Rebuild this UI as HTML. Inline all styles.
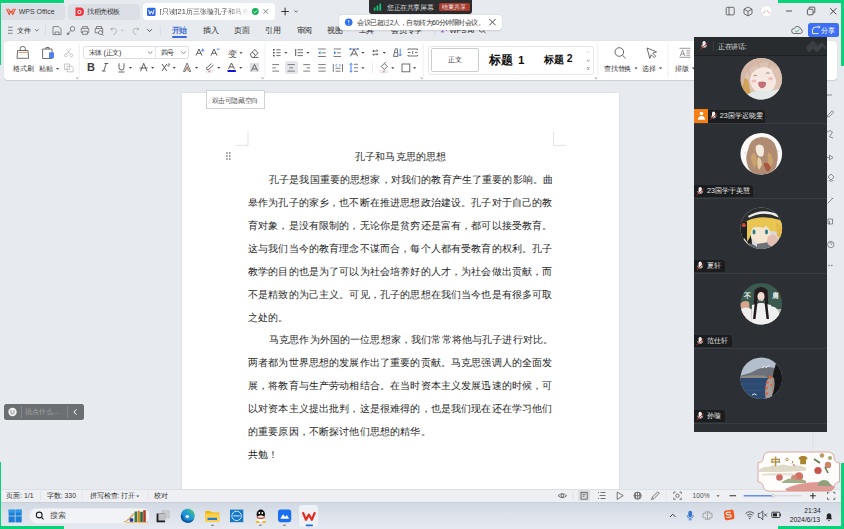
<!DOCTYPE html>
<html><head><meta charset="utf-8"><style>
*{margin:0;padding:0;box-sizing:border-box}
body{width:844px;height:529px;overflow:hidden;position:relative;background:#e7eaef;font-family:"Liberation Sans",sans-serif;color:#333}
.a{position:absolute}
.t{position:absolute;white-space:nowrap;line-height:1}
svg{position:absolute;left:0;top:0;overflow:visible}
.doc{position:absolute;left:248px;font-family:"Liberation Serif",serif;font-size:10px;letter-spacing:.15px;line-height:1;color:#1f1f1f;white-space:nowrap}
.g{position:absolute;background:#08d27a}
.m{font-size:8px;letter-spacing:-.25px;top:27.2px;color:#2b2b2b}
.rl{font-size:7px;letter-spacing:-.35px;color:#333}
.nm{position:absolute;height:12px;background:#1b1c1e;border-radius:0 4px 0 0;color:#e8e8e8;font-size:7.2px;line-height:12px;white-space:nowrap}
</style></head><body>
<!-- ============ TAB BAR ============ -->
<div class="a" style="left:1px;top:3.7px;width:64px;height:16px;background:#dcdfe5;border-radius:0 4px 4px 0"></div>
<div class="a" style="left:68px;top:3.7px;width:71.5px;height:16px;background:#dcdfe5;border-radius:4px"></div>
<div class="a" style="left:143px;top:3px;width:132px;height:16.7px;background:#fff;border-radius:4px"></div>
<div class="t" style="left:18.7px;top:7.6px;font-size:7px;color:#3a3a3a">WPS Office</div>
<div class="t" style="left:87px;top:7.8px;font-size:7px;letter-spacing:-.4px;color:#333">找稻壳模板</div>
<div class="t" style="left:159.5px;top:7.8px;font-size:7.4px;color:#444;width:90px;overflow:hidden;-webkit-mask-image:linear-gradient(90deg,#000 75%,transparent)">[只读]21历三张璇孔子和马克思</div>
<svg width="844" height="529">
 <!-- WPS logo -->
 <path d="M6.6 8.8 L9.2 14.6 L11 11 L12.8 14.6 L15.4 8.8 M8.6 8.8 L10.2 12.4 M13.4 8.8 L11.8 12.4" fill="none" stroke="#ea4a2e" stroke-width="1.1" stroke-linejoin="round"/>
 <!-- daoke icon -->
 <path d="M75.5 7.6 h4.5 a4 4.2 0 0 1 0 8.4 h-4.5 z" fill="#e9383f"/>
 <circle cx="79.3" cy="12" r="1.6" fill="none" stroke="#fff" stroke-width=".9"/>
 <!-- W doc icon -->
 <rect x="147" y="7.8" width="8.6" height="8.3" rx="1.3" fill="#2f67e6"/>
 <path d="M148.6 9.8 L149.8 14.2 L151.3 11 L152.8 14.2 L154 9.8" fill="none" stroke="#fff" stroke-width=".9"/>
 <!-- green check -->
 <circle cx="255.3" cy="11.5" r="3.4" fill="#14b05a"/>
 <path d="M253.6 11.6 l1.2 1.2 l2.2 -2.3" fill="none" stroke="#fff" stroke-width=".9"/>
 <!-- close x -->
 <path d="M263.5 9.2 l4.6 4.6 M268.1 9.2 l-4.6 4.6" stroke="#666" stroke-width=".8"/>
 <!-- plus -->
 <path d="M281.3 11.5 h7.6 M285.1 7.7 v7.6" stroke="#333" stroke-width="1"/>
 <path d="M294.5 10.7 l1.6 1.5 l1.6 -1.5" fill="none" stroke="#444" stroke-width=".8"/>
 <!-- top right icons -->
 <rect x="726.2" y="7.3" width="8" height="7.6" rx="1" fill="none" stroke="#555" stroke-width=".85"/>
 <path d="M729 7.3 v7.6" stroke="#555" stroke-width=".85"/>
 <path d="M748 7 l4 2.2 v4.5 l-4 2.2 l-4 -2.2 v-4.5 z M744 9.2 l4 2.2 l4 -2.2 M748 11.4 v4.5" fill="none" stroke="#555" stroke-width=".85"/>
 <circle cx="766.4" cy="11.2" r="5.6" fill="#fff" stroke="#d8dadd" stroke-width=".6"/>
 <ellipse cx="763.6" cy="12.6" rx="1.1" ry=".8" fill="#f6b8b8"/><ellipse cx="769.2" cy="12.6" rx="1.1" ry=".8" fill="#f6b8b8"/>
 <path d="M764.6 10.3 l.9 .6 l-.9 .6 M768.2 10.3 l-.9 .6 l.9 .6" fill="none" stroke="#666" stroke-width=".45"/>
 <path d="M786 11 h6" stroke="#444" stroke-width=".9"/>
 <rect x="807.4" y="9.2" width="5.6" height="5.6" rx="1" fill="none" stroke="#444" stroke-width=".85"/>
 <path d="M809 9.2 v-1.3 a.8 .8 0 0 1 .8 -.8 h4.2 a.8 .8 0 0 1 .8 .8 v4.2 a.8 .8 0 0 1 -.8 .8 h-1" fill="none" stroke="#444" stroke-width=".85"/>
 <path d="M830.2 8.2 l6.2 6.2 M836.4 8.2 l-6.2 6.2" stroke="#333" stroke-width=".9"/>
</svg>
<!-- ============ MENU ROW ============ -->
<div class="t" style="left:17px;top:26.8px;font-size:7px;letter-spacing:-.3px;color:#2b2b2b">文件</div>
<div class="t m" style="left:171.5px;color:#2f5fd0;-webkit-text-stroke:.2px #2f5fd0">开始</div>
<div class="a" style="left:172px;top:36.3px;width:15px;height:1.4px;background:#3a68e0;border-radius:1px"></div>
<div class="t m" style="left:203px">插入</div>
<div class="t m" style="left:234px">页面</div>
<div class="t m" style="left:265px">引用</div>
<div class="t m" style="left:296.5px">审阅</div>
<div class="t m" style="left:327px">视图</div>
<div class="t m" style="left:358.5px">工具</div>
<div class="t m" style="left:391px">会员专享</div>
<div class="t m" style="left:449.5px;font-size:7.6px;top:27px">WPS AI</div>
<div class="a" style="left:808px;top:23px;width:30.5px;height:13.5px;background:#3d6ef5;border-radius:2.5px"></div>
<div class="t" style="left:821px;top:26.5px;font-size:7.4px;color:#fff">分享</div>
<svg width="844" height="529">
 <path d="M8 27.2 h4.6 M8 30.3 h4.6 M8 33.3 h4.6" stroke="#555" stroke-width=".7"/>
 <path d="M35 29.3 l1.8 1.7 l1.8 -1.7" fill="none" stroke="#555" stroke-width=".8"/>
 <path d="M45.5 25 v11 M160.3 25.5 v10" stroke="#d0d3d8" stroke-width=".6"/>
 <!-- save -->
 <path d="M53 26.6 h5.8 l2.2 2.2 v5.8 h-8 z M55 34.6 v-2.6 h4 v2.6" fill="none" stroke="#606060" stroke-width=".7"/>
 <!-- link P -->
 <circle cx="72.5" cy="28.8" r="2.3" fill="none" stroke="#606060" stroke-width=".75"/>
 <path d="M70.8 30.5 l-3 3.6" stroke="#606060" stroke-width=".75"/>
 <circle cx="68" cy="33.8" r=".9" fill="none" stroke="#555" stroke-width=".7"/>
 <!-- printer -->
 <path d="M82.6 28.4 v-1.8 h4.8 v1.8 M81.2 28.4 h7.6 v4.2 h-1.4 M82.6 32.6 h-1.4 v-4.2 M82.6 31.2 h4.8 v3.2 h-4.8z" fill="none" stroke="#606060" stroke-width=".7"/>
 <!-- print preview -->
 <path d="M96.5 28.5 v-2 h5 v2 M95.2 28.5 h7.5 v4.3 h-7.5 z" fill="none" stroke="#606060" stroke-width=".75"/>
 <circle cx="100.5" cy="32.6" r="2" fill="#e7eaef" stroke="#606060" stroke-width=".75"/>
 <path d="M102 34 l1.6 1.6" stroke="#606060" stroke-width=".75"/>
 <!-- undo redo -->
 <path d="M112 27.5 l-1.3 2 l2.2 .6 M110.8 29.4 c2.5 -2 6 -1 5.5 2.3 c-.3 2 -2 2.5 -3.2 2.6" fill="none" stroke="#aaa" stroke-width=".85"/>
 <path d="M121 29.8 l1.3 1.2 l1.3 -1.2" fill="none" stroke="#aaa" stroke-width=".7"/>
 <path d="M137.5 27.5 l1.3 2 l-2.2 .6 M138.7 29.4 c-2.5 -2 -6 -1 -5.5 2.3 c.3 2 2 2.5 3.2 2.6" fill="none" stroke="#aaa" stroke-width=".85"/>
 <path d="M147.3 29.3 l2.3 2.2 l2.3 -2.2" fill="none" stroke="#444" stroke-width=".9"/>
 <!-- separator & ai & search -->
 <path d="M435 25 v11" stroke="#d0d3d8" stroke-width=".6"/>
 <path d="M441.5 27.5 l2 5 M443.5 27.5 l-2 5 M445 27 l1.5 3 l1.5 -3" stroke="#a05ff0" stroke-width="1.1"/>
 <circle cx="481.8" cy="29.5" r="2.6" fill="none" stroke="#555" stroke-width=".85"/>
 <path d="M483.7 31.4 l1.9 1.9" stroke="#555" stroke-width=".85"/>
 <!-- cloud check -->
 <path d="M794 33.5 a2.5 2.5 0 0 1 .3 -5 a3.3 3.3 0 0 1 6.3 .5 a2.3 2.3 0 0 1 -.3 4.5 z" fill="none" stroke="#555" stroke-width=".85"/>
 <path d="M795.2 30.8 l1.3 1.3 l2.6 -2.6" fill="none" stroke="#16a35a" stroke-width=".9"/>
 <!-- share icon -->
 <path d="M812.5 30 v3.6 h6 M816 27 h4 l-1.3 -1.3 M820 27 l-1.3 1.3 M812.5 30 a3.3 3.3 0 0 1 3.5 -3" fill="none" stroke="#fff" stroke-width=".9"/>
</svg>
<!-- ============ RIBBON ============ -->
<div class="a" style="left:4px;top:40.6px;width:833px;height:39.9px;background:#fff;border-radius:4px;box-shadow:0 .6px 1.2px rgba(0,0,0,.12)"></div>
<div class="t rl" style="left:13.3px;top:65px">格式刷</div>
<div class="t rl" style="left:39.3px;top:65px">粘贴</div>
<!-- font combo -->
<div class="a" style="left:83.3px;top:45.9px;width:105.5px;height:13.1px;border:.8px solid #dcdfe3;border-radius:2.5px"></div>
<div class="a" style="left:155.3px;top:46px;width:.7px;height:13px;background:#e2e4e8"></div>
<div class="t" style="left:88.5px;top:48.8px;font-size:7.2px;letter-spacing:-.3px;color:#333">宋体 (正文)</div>
<div class="t" style="left:160.8px;top:48.8px;font-size:7.2px;letter-spacing:-.5px;color:#333">四号</div>
<!-- styles gallery -->
<div class="a" style="left:428px;top:46px;width:165.5px;height:28.5px;border:.8px solid #e4e6ea;border-radius:3px"></div>
<div class="a" style="left:430.5px;top:48px;width:48.5px;height:24px;border:1.6px solid #c9ccd1;border-radius:2px"></div>
<div class="t" style="left:447.5px;top:56.3px;font-size:7.2px;color:#333">正文</div>
<div class="t" style="left:489px;top:53.5px;font-size:12.2px;font-weight:bold;color:#111">标题</div>
<div class="t" style="left:518px;top:54.3px;font-size:11.6px;font-weight:bold;color:#111">1</div>
<div class="t" style="left:543.5px;top:54.6px;font-size:10.2px;font-weight:bold;color:#111">标题</div>
<div class="t" style="left:566.8px;top:54.4px;font-size:10.4px;font-weight:bold;color:#111">2</div>
<div class="t rl" style="left:604.3px;top:65.2px">查找替换</div>
<div class="t rl" style="left:642px;top:65.2px">选择</div>
<div class="t rl" style="left:675.4px;top:65.2px">排版</div>
<!-- highlighted boxes -->
<div class="a" style="left:285px;top:61.4px;width:12.6px;height:12.6px;background:#e6e7ea;border-radius:2px"></div>
<div class="a" style="left:250px;top:63.1px;width:9px;height:9.1px;background:#dddfe2"></div>
<svg width="844" height="529">
 <g fill="none" stroke="#555" stroke-width=".85" stroke-linejoin="round" stroke-linecap="round">
 <!-- format painter bag -->
 <path d="M18 50.5 h10 l.6 7.8 h-11.2 z M20.3 50.5 v-2.2 a2.5 1.8 0 0 1 5 0 v2.2"/>
 <path d="M19 52.4 h8" stroke="#f07d3c"/>
 <!-- paste clipboard -->
 <path d="M43 49 h9 v9.5 h-9 z M46 49 v-1.5 h3 v1.5"/>
 </g>
 <rect x="49" y="52.2" width="5" height="6" rx=".8" fill="#4f7ff0"/>
 <g fill="none" stroke="#bbb" stroke-width=".8">
 <circle cx="65.8" cy="55.3" r="1.4"/><circle cx="71.3" cy="55.3" r="1.4"/>
 <path d="M66.7 54.2 l4.2 -5.6 M70.4 54.2 l-4.2 -5.6"/>
 <path d="M64.5 64 h5 v5.5 h-5 z M67 66.2 h5 l1.2 1.2 v4.4 h-6.2 z"/>
 </g>
 <path d="M55.9 68 l1.6 1.7 l1.6 -1.7 z" fill="#444"/>
 <path d="M76 77 l1.8 1.8 M77.8 77.4 v1.4 h-1.4" stroke="#999" stroke-width=".6" fill="none"/>
 <path d="M79.3 43.5 v34" stroke="#e6e8eb" stroke-width=".7"/>
 <!-- combo chevrons -->
 <path d="M148 51.4 l2.2 2.1 l2.2 -2.1 M181.2 51.4 l2.2 2.1 l2.2 -2.1" fill="none" stroke="#666" stroke-width=".75"/>
 <!-- row2 B I U A X2 -->
 <text x="87" y="71.1" font-size="11" font-weight="bold" fill="#3d3d3d" font-family="Liberation Sans">B</text>
 <path d="M104.5 63.5 h3.8 M101.8 71 h3.8 M106.3 63.5 l-2.6 7.5" fill="none" stroke="#444" stroke-width=".85"/>
 <path d="M119 63.3 v4.2 a2.5 2.5 0 0 0 5 0 v-4.2 M118.5 72 h6" fill="none" stroke="#444" stroke-width=".85"/>
 <path d="M140.5 71.3 l3.2 -8 l3.2 8 M139.6 68 h8" fill="none" stroke="#444" stroke-width=".85"/>
 <path d="M162 64 l4.8 7 M166.8 64 l-4.8 7" stroke="#444" stroke-width=".9"/>
 <path d="M167.8 63.8 h1.7 v1.2 h-1.7 v1.2 h1.7" fill="none" stroke="#444" stroke-width=".55"/>
 <g fill="#444">
 <path d="M128.9 67 l1.6 1.7 l1.6 -1.7 z M151 67 l1.6 1.7 l1.6 -1.7 z M172.5 67 l1.6 1.7 l1.6 -1.7 z M195 67 l1.6 1.7 l1.6 -1.7 z M217.2 67 l1.6 1.7 l1.6 -1.7 z M239.2 67 l1.6 1.7 l1.6 -1.7 z"/>
 <path d="M239.4 52.2 l1.6 1.7 l1.6 -1.7 z M284.3 52 l1.6 1.7 l1.6 -1.7 z M306.3 52 l1.6 1.7 l1.6 -1.7 z M361.3 52 l1.6 1.7 l1.6 -1.7 z M382.7 52 l1.6 1.7 l1.6 -1.7 z M361.3 67.3 l1.6 1.7 l1.6 -1.7 z M391.2 67.3 l1.6 1.7 l1.6 -1.7 z M413 67.3 l1.6 1.7 l1.6 -1.7 z"/>
 <path d="M634.5 67.6 l1.6 1.7 l1.6 -1.7 z M659 67.6 l1.6 1.7 l1.6 -1.7 z M691.8 67.6 l1.6 1.7 l1.6 -1.7 z"/>
 </g>
 <!-- A+ A- -->
 <path d="M196 55.6 l3 -6.6 l3 6.6 M197.1 53.3 h3.8" fill="none" stroke="#444" stroke-width=".85"/>
 <path d="M201.2 50.2 h3.2 M202.8 48.6 v3.2" stroke="#3d7cf0" stroke-width=".9"/>
 <path d="M211 55.6 l3 -6.6 l3 6.6 M212.1 53.3 h3.8" fill="none" stroke="#444" stroke-width=".85"/>
 <path d="M216.6 49.2 h3" stroke="#3d7cf0" stroke-width=".9"/>
 <!-- pinyin -->
 <text x="227.5" y="56.8" font-size="9" fill="#444" font-family="Liberation Sans">变</text>
 <!-- eraser -->
 <path d="M250.2 54.2 l4.6 -4.6 l3.2 3.2 l-4.6 4.6 h-1.6 z M252.3 52.1 l3.2 3.2 M253.5 57.4 h5" fill="none" stroke="#444" stroke-width=".85"/>
 <!-- row2 A outline, highlighter, color, shade -->
 <path d="M183.5 71.5 l3.6 -8.5 l3.6 8.5 h-1.6 l-2 -4.8 l-2 4.8 z" fill="none" stroke="#555" stroke-width=".8" stroke-linejoin="round"/>
 <path d="M185.9 70.3 l1.2 -2.6 l1.2 2.6 z" fill="#f07d3c"/>
 <path d="M206 68.5 l5.5 -5 M208 70 l5.5 -5 M206 68.5 l2 1.5" fill="none" stroke="#444" stroke-width=".85"/>
 <ellipse cx="209.3" cy="71.4" rx="3.3" ry="1" fill="none" stroke="#ccc" stroke-width=".6"/>
 <path d="M208 71.8 l2.5 -.8" stroke="#e05050" stroke-width=".7"/>
 <path d="M228.5 69 l3 -6 l3 6 M229.6 67 h3.8" fill="none" stroke="#444" stroke-width=".85"/>
 <rect x="227.5" y="70" width="8.4" height="2" rx=".6" fill="#1010e0"/>
 <path d="M251.4 71 l3.1 -6.6 l3.1 6.6 M252.5 68.9 h4" fill="none" stroke="#555" stroke-width=".85"/>
 <path d="M261.3 76.9 l1.8 1.8 M263.1 77.3 v1.4 h-1.4" stroke="#999" stroke-width=".6" fill="none"/>
 <path d="M265 43.5 v34" stroke="#e6e8eb" stroke-width=".7"/>
 <!-- lists -->
 <g fill="#555"><rect x="273" y="49" width="1.6" height="1.6"/><rect x="273" y="51.9" width="1.6" height="1.6"/><rect x="273" y="54.8" width="1.6" height="1.6"/>
 <rect x="295.2" y="49" width="1" height="7"/></g>
 <path d="M276.3 49.8 h4.3 M276.3 52.7 h4.3 M276.3 55.6 h4.3 M297.5 49.8 h5.5 M297.5 52.7 h5.5 M297.5 55.6 h5.5" stroke="#555" stroke-width=".85"/>
 <!-- indent -->
 <path d="M318 49 h7.8 M321.5 52.8 h4.3 M318 56.5 h7.8 M333.6 49 h7.5 M337 52.8 h4 M333.6 56.5 h7.5" stroke="#666" stroke-width=".85"/>
 <path d="M318.3 52.8 l2.2 -1.8 v3.6 z M336.2 52.8 l-2.2 -1.8 v3.6 z" fill="#3d7cf0"/>
 <!-- text scale -->
 <path d="M350.5 56.3 l3.6 -7.2 l3.6 7.2 M351.8 54 h4.6" fill="none" stroke="#444" stroke-width=".85"/>
 <path d="M351.2 49 h5.8" stroke="#555" stroke-width=".7"/><g fill="#3d7cf0"><circle cx="350.3" cy="48.9" r="1"/><circle cx="357.9" cy="48.9" r="1"/></g>
 <!-- swap -->
 <path d="M372.5 51 h5.5 l-1.5 -1.5 M378.2 54.3 h-5.5 l1.5 1.5 M373.5 50 v2 M377 53.3 v2" fill="none" stroke="#555" stroke-width=".85"/>
 <!-- sort -->
 <path d="M393.5 56.4 l1.8 -7.6 h2 l.6 7.6 z M394.4 52.6 h2.5" fill="none" stroke="#555" stroke-width=".85"/>
 <path d="M400.2 48.5 v7.4 M398.6 54.3 l1.6 1.7 l1.6 -1.7" fill="none" stroke="#3d7cf0" stroke-width=".9"/>
 <!-- table-ish -->
 <path d="M408 50 v-1 h9.5 v1 M408 55 v1 h9.5 v-1 M408 52.5 h2.5 M415 52.5 h2.5 M412.7 51 v3" fill="none" stroke="#555" stroke-width=".85"/>
 <!-- row2 alignments -->
 <g stroke="#666" stroke-width=".85">
 <path d="M272.3 64.6 h6.8 M272.3 67.9 h3.6 M272.3 71.1 h6.8"/>
 <path d="M287.5 64.6 h7.4 M289.3 67.9 h3.8 M287.5 71.1 h7.4"/>
 <path d="M303.3 64.6 h6.8 M306.5 67.9 h3.6 M303.3 71.1 h6.8"/>
 <path d="M318.3 64.6 h7.4 M318.3 67.9 h7.4 M318.3 71.1 h7.4"/>
 <path d="M333.3 64 v8 M342.5 64 v8 M335.5 68.3 h5 M335.5 71.2 h5"/>
 </g>
 <path d="M336.8 64 l-1.2 1.3 l1.2 1.3 M339.3 64 l1.2 1.3 l-1.2 1.3" fill="none" stroke="#3d7cf0" stroke-width=".8"/>
 <!-- line spacing -->
 <path d="M351 63.5 v8.5" stroke="#3d7cf0" stroke-width="1"/>
 <path d="M349.6 64.8 l1.4 -1.5 l1.4 1.5 M349.6 70.8 l1.4 1.5 l1.4 -1.5" fill="none" stroke="#3d7cf0" stroke-width=".9"/>
 <path d="M354 64.3 h4 M354 67.8 h4 M354 71.3 h4" stroke="#666" stroke-width=".85"/>
 <path d="M372.5 63 v10" stroke="#e0e2e6" stroke-width=".7"/>
 <!-- shading -->
 <path d="M381.3 66.5 l3 -3 l3 3 l-3 3 z M384.3 63.5 l1.5 -1.5" fill="none" stroke="#555" stroke-width=".85"/>
 <ellipse cx="383.8" cy="71.5" rx="4.2" ry="1.1" fill="none" stroke="#ccc" stroke-width=".6"/>
 <path d="M382.5 72 l2.5 -1" stroke="#e05050" stroke-width=".7"/>
 <!-- border -->
 <rect x="402" y="64" width="7.8" height="7.8" fill="none" stroke="#555" stroke-width=".85"/>
 <path d="M405.9 66.5 v.01 M405.9 69 v.01" stroke="#999" stroke-width=".7"/>
 <path d="M420.5 77 l1.8 1.8 M422.3 77.4 v1.4 h-1.4" stroke="#999" stroke-width=".6" fill="none"/>
 <path d="M423.2 43.5 v34" stroke="#e6e8eb" stroke-width=".7"/>
 <!-- gallery scroll arrows -->
 <path d="M587 52.5 l1.3 -1.2 l1.3 1.2" fill="none" stroke="#bbb" stroke-width=".6"/>
 <path d="M587 60 l1.3 1.2 l1.3 -1.2" fill="none" stroke="#666" stroke-width=".7"/>
 <path d="M587 67 l1.3 1.2 l1.3 -1.2 M587.2 69.2 h2.2" fill="none" stroke="#666" stroke-width=".7"/>
 <path d="M594.6 77 l1.8 1.8 M596.4 77.4 v1.4 h-1.4" stroke="#999" stroke-width=".6" fill="none"/>
 <path d="M597.8 43.5 v34" stroke="#e6e8eb" stroke-width=".7"/>
 <!-- search / select / layout -->
 <circle cx="619.3" cy="52" r="4.3" fill="none" stroke="#555" stroke-width=".9"/>
 <path d="M622.4 55.2 l3.3 3.2" stroke="#555" stroke-width=".9"/>
 <path d="M647 48 l9.5 3.8 l-3.8 1.4 l3 3 l-1.5 1.5 l-3 -3 l-1.4 3.8 z" fill="none" stroke="#555" stroke-width=".85" stroke-linejoin="round"/>
 <path d="M668.2 43.5 v34" stroke="#e6e8eb" stroke-width=".7"/>
 <path d="M679.5 48.3 h11 M679.5 57.3 h11 M680.3 56 l2.3 -5.8 l2.3 5.8 M681.1 54 h3 M686.3 50.8 h3.8 M686.3 53 h3.8 M686.3 55.2 h3.8" fill="none" stroke="#555" stroke-width=".6"/>
</svg>
<!-- ============ DOC AREA ============ -->
<div class="a" style="left:182px;top:92.6px;width:437px;height:397px;background:#fff;box-shadow:0 0 2px rgba(0,0,0,.1)"></div>
<div class="a" style="left:205.5px;top:90.4px;width:59.3px;height:19px;background:#fff;border:.7px solid #cfd2d6"></div>
<div class="t" style="left:211.5px;top:96.5px;font-size:7px;letter-spacing:-.4px;color:#555">双击可隐藏空白</div>
<svg width="844" height="529">
 <path d="M248 132 v13.4 h-12.6 M553.6 132 v13.4 h12.6" fill="none" stroke="#cfcfcf" stroke-width=".6"/>
 <g fill="#777"><rect x="226.2" y="152.3" width="1.5" height="1.5"/><rect x="229" y="152.3" width="1.5" height="1.5"/><rect x="226.2" y="155.3" width="1.5" height="1.5"/><rect x="229" y="155.3" width="1.5" height="1.5"/><rect x="226.2" y="158.3" width="1.5" height="1.5"/><rect x="229" y="158.3" width="1.5" height="1.5"/></g>
 <path d="M812.6 431 v58" stroke="#d9dce1" stroke-width=".6"/>
</svg>
<div class="doc" style="left:355px;top:151.5px">孔子和马克思的思想</div>
<div class="doc" style="left:269px;top:175.3px">孔子是我国重要的思想家，对我们的教育产生了重要的影响。曲</div>
<div class="doc" style="top:198.18px">皋作为孔子的家乡，也不断在推进思想政治建设。孔子对于自己的教</div>
<div class="doc" style="top:221.06px">育对象，是没有限制的，无论你是贫穷还是富有，都可以接受教育。</div>
<div class="doc" style="top:243.94px">这与我们当今的教育理念不谋而合，每个人都有受教育的权利。孔子</div>
<div class="doc" style="top:266.82px">教学的目的也是为了可以为社会培养好的人才，为社会做出贡献，而</div>
<div class="doc" style="top:289.7px">不是精致的为己主义。可见，孔子的思想在我们当今也是有很多可取</div>
<div class="doc" style="top:312.58px">之处的。</div>
<div class="doc" style="left:269px;top:335.46px">马克思作为外国的一位思想家，我们常常将他与孔子进行对比。</div>
<div class="doc" style="top:358.34px">两者都为世界思想的发展作出了重要的贡献。马克思强调人的全面发</div>
<div class="doc" style="top:381.22px">展，将教育与生产劳动相结合。在当时资本主义发展迅速的时候，可</div>
<div class="doc" style="top:404.1px">以对资本主义提出批判，这是很难得的，也是我们现在还在学习他们</div>
<div class="doc" style="top:426.98px">的重要原因，不断探讨他们思想的精华。</div>
<div class="doc" style="top:449.86px">共勉！</div>
<!-- right side partially hidden toolbar -->
<svg width="844" height="529">
 <g fill="none" stroke="#6a6d72" stroke-width=".75" stroke-linejoin="round">
 <path d="M827 95 h5"/>
 <path d="M827.5 115.5 l4.8 -4.8 l1.4 1.4 l-4.8 4.8 h-1.4z"/>
 <path d="M827 132 l3 -1.5 l2.5 1.5 l-2.5 4 M829 136.5 l4 1.5"/>
 <path d="M827 157.5 h2.5 M829.5 155 l3.5 2.5 l-3.5 2.5 z"/>
 <path d="M828 177 l3 -3 l3 3 l-3 3 z"/><path d="M828.5 180.5 q2.5 1.5 5 0"/>
 <path d="M827.5 203.5 l5.5 -5.5 M831.5 197.5 l1.5 1.5"/>
 <path d="M828 219 h4.5 v5 h-4.5z M829.5 221 v3"/>
 <circle cx="830.8" cy="244.5" r="3.2"/><path d="M829.8 243.5 a1 1 0 1 1 1.5 1 v.6"/>
 </g>
 <g fill="#6a6d72"><circle cx="829" cy="265.5" r=".75"/><circle cx="831.8" cy="265.5" r=".75"/></g>
</svg>
<!-- floating comment button -->
<div class="a" style="left:4px;top:403.7px;width:79.7px;height:16.3px;background:#6c6f71;border-radius:2.5px"></div>
<div class="a" style="left:20.5px;top:406px;width:.7px;height:12px;background:#83868a"></div>
<div class="a" style="left:67px;top:406px;width:.7px;height:12px;background:#83868a"></div>
<div class="t" style="left:25px;top:408.3px;font-size:7.2px;color:#a3a5a8">说点什么...</div>
<svg width="844" height="529">
 <circle cx="12.5" cy="412" r="4.2" fill="#f2f2f2"/>
 <path d="M11 410.2 v2.2 a1.5 1.5 0 0 0 3 0 v-2.2" fill="none" stroke="#6c6f71" stroke-width=".8"/>
 <path d="M76.5 409.3 l-2.6 2.7 l2.6 2.7" fill="none" stroke="#fff" stroke-width="1"/>
</svg>
<!-- ============ STATUS BAR ============ -->
<div class="a" style="left:0;top:489px;width:844px;height:13px;background:#eef0f3;border-top:.7px solid #dcdfe4"></div>
<div class="t" style="left:6.3px;top:493.4px;font-size:6.8px;color:#333">页面: 1/1</div>
<div class="t" style="left:46.8px;top:493.4px;font-size:6.8px;color:#333">字数: 330</div>
<div class="t" style="left:90px;top:493.4px;font-size:6.8px;letter-spacing:-.1px;color:#333">拼写检查: 打开</div>
<div class="t" style="left:154.4px;top:493.4px;font-size:6.8px;color:#333">校对</div>
<div class="t" style="left:692.5px;top:493.2px;font-size:6.7px;color:#555">100%</div>
<div class="a" style="left:578px;top:490.3px;width:12px;height:10.5px;background:#dcdee2;border-radius:1.5px"></div>
<svg width="844" height="529">
 <path d="M40.5 491 v9 M82 491 v9 M148 491 v9 M573 491 v9 M666 491 v9" stroke="#d8dbe0" stroke-width=".6"/>
 <path d="M136.2 495.5 l1.6 1.7 l1.6 -1.7 z M716.5 495.2 l1.6 1.7 l1.6 -1.7 z" fill="#555"/>
 <g fill="none" stroke="#555" stroke-width=".8">
 <path d="M558 495.7 q4.3 -4 8.6 0 q-4.3 4 -8.6 0 z"/><circle cx="562.3" cy="495.7" r="1.3"/>
 <rect x="581" y="492.3" width="6.2" height="6.8"/><path d="M582.5 494.3 h3 M582.5 496.2 h2"/>
 <path d="M598 492.5 h1 M600.5 492.5 h5 M599.5 495.5 h6 M598 498.5 h1 M600.5 498.5 h5"/>
 <path d="M617.2 492 l6 3.7 l-6 3.7 z"/>
 <circle cx="637.6" cy="495.7" r="3.6"/><path d="M634 495.7 h7.2 M637.6 492.1 v7.2 M635.8 492.5 q-1 3.2 0 6.4 M639.4 492.5 q1 3.2 0 6.4"/>
 <path d="M651.5 499.5 l1 -2.5 l5.2 -5.2 l1.5 1.5 l-5.2 5.2 z"/>
 <path d="M673.8 493.8 v-1.8 h1.8 M679.5 492 h1.8 v1.8 M681.3 497.6 v1.8 h-1.8 M675.6 499.4 h-1.8 v-1.8"/><circle cx="677.5" cy="495.7" r="1.7"/>
 </g>
 <path d="M729.5 495.8 h6.5 M810 495.8 h5.8 M812.9 492.9 v5.8" stroke="#333" stroke-width="1.1"/>
 <path d="M743.7 495.8 h29" stroke="#4d7cf0" stroke-width="1.3"/>
 <path d="M773 495.8 h28.5" stroke="#cfd2d6" stroke-width="1.1"/>
 <circle cx="773" cy="495.8" r="1.3" fill="#fff" stroke="#999" stroke-width=".5"/>
 <path d="M827.5 494 v-1.8 h1.8 M833 492.2 h1.8 v1.8 M834.8 497.6 v1.8 h-1.8 M829.3 499.4 h-1.8 v-1.8" fill="none" stroke="#555" stroke-width=".8"/>
</svg>
<!-- ============ TASKBAR ============ -->
<div class="a" style="left:0;top:501.8px;width:844px;height:27.2px;background:linear-gradient(180deg,#d2d9e3,#dce2ea 45%,#e5e9f0);border-top:.6px solid #c8cfd9"></div>
<div class="a" style="left:29.4px;top:508px;width:120.4px;height:15.7px;background:#f1f3f7;border-radius:8px;box-shadow:inset 0 0 0 .6px #dde1e7"></div>
<div class="t" style="left:49.7px;top:511.5px;font-size:8px;color:#555">搜索</div>
<div class="a" style="left:299.3px;top:505.3px;width:19.2px;height:21.4px;background:#eef1f5;border-radius:3px"></div>
<div class="t" style="left:804.3px;top:507.8px;font-size:6.5px;color:#222">21:34</div>
<div class="t" style="left:789.7px;top:516.8px;font-size:6.85px;color:#222">2024/6/13</div>
<svg width="844" height="529">
 <!-- windows logo -->
 <g fill="#1b7fd6"><rect x="8.6" y="509.6" width="6.2" height="6.1"/><rect x="15.5" y="509.6" width="6.2" height="6.1"/><rect x="8.6" y="516.3" width="6.2" height="6.1"/><rect x="15.5" y="516.3" width="6.2" height="6.1"/></g>
 <g fill="#3aa3ee" opacity=".8"><rect x="8.6" y="509.6" width="6.2" height="3"/><rect x="15.5" y="509.6" width="6.2" height="3"/></g>
 <circle cx="39.2" cy="515" r="2.9" fill="none" stroke="#222" stroke-width="1.1"/>
 <path d="M41.3 517.1 l2.2 2.2" stroke="#222" stroke-width="1.2"/>
 <!-- books -->
 <path d="M123 522 q5 -2 10 -9 l1.5 1 q-4 6 -10 8.5 z" fill="#d8b17a"/>
 <path d="M126 522.5 h22" stroke="#e7c07a" stroke-width="1.2"/>
 <circle cx="131.5" cy="520" r="2" fill="#2b3e8a"/>
 <rect x="134.5" y="511.5" width="2.6" height="10.5" fill="#3f7a3a"/>
 <rect x="137.5" y="510.8" width="2.4" height="11.2" fill="#c78a2a"/>
 <rect x="140.2" y="511.8" width="2.6" height="10.2" fill="#2f6a3a"/>
 <rect x="143.2" y="510.2" width="2.6" height="11.8" fill="#b33a2a"/>
 <!-- task view -->
 <rect x="161" y="510" width="9" height="8.5" fill="#c9cbcf"/>
 <rect x="156.6" y="513.5" width="8.5" height="8.8" fill="#1e1e1e"/>
 <rect x="158.4" y="513.5" width="6.7" height="7" fill="#bfc2c6"/>
 <!-- edge -->
 <defs><linearGradient id="edg" x1="0" y1="1" x2="1" y2="0"><stop offset="0" stop-color="#1670c8"/><stop offset=".55" stop-color="#1e9ad8"/><stop offset="1" stop-color="#56d05a"/></linearGradient></defs>
 <circle cx="187.8" cy="515.7" r="7" fill="url(#edg)"/>
 <path d="M180.8 515.2 a7 7 0 0 0 13.3 3.6 q-3.5 2.6 -7.5 1.6 q-3.8 -1.2 -3.6 -4.5 q-1.5 -1.3 -2.2 -.7z" fill="#0f5aa8"/>
 <ellipse cx="187.3" cy="516.6" rx="1.8" ry="1.5" fill="#eef1f5"/>
 <!-- explorer -->
 <path d="M205.3 511 h5 l1.5 1.5 h7.5 v9.3 h-14 z" fill="#f2b400"/>
 <rect x="205.3" y="513.5" width="14" height="8.3" fill="#fcd04a"/>
 <rect x="207.5" y="517.8" width="9.5" height="2.2" fill="#1f7ad8"/>
 <!-- dell -->
 <rect x="230" y="509.6" width="13.3" height="12.6" fill="#1678c6"/>
 <circle cx="236.6" cy="515.9" r="4.7" fill="none" stroke="#fff" stroke-width=".8"/>
 <path d="M233.5 515.9 h6.2" stroke="#fff" stroke-width=".9"/>
 <!-- qq -->
 <ellipse cx="260.8" cy="514.3" rx="4.2" ry="4.8" fill="#111"/>
 <ellipse cx="260.8" cy="518.8" rx="3.8" ry="3.2" fill="#fff"/>
 <path d="M256.7 516.8 q4 1.8 8.2 0 l-.3 1.5 q-3.8 1.3 -7.6 0z" fill="#e0261c"/>
 <ellipse cx="257.6" cy="522" rx="2" ry="1" fill="#f5b500"/><ellipse cx="264" cy="522" rx="2" ry="1" fill="#f5b500"/>
 <circle cx="259.3" cy="513" r=".9" fill="#fff"/><circle cx="262.3" cy="513" r=".9" fill="#fff"/>
 <path d="M259.3 515.3 h3 l-1.5 1z" fill="#f5b500"/>
 <!-- tencent meeting -->
 <rect x="278" y="509.6" width="13.2" height="12.6" rx="2.4" fill="#1a6ff0"/>
 <path d="M280.3 518.8 l2.7 -4.5 l2.2 2.8 l1.6 -2.2 l2.4 3.9 z" fill="#fff"/>
 <!-- wps -->
 <path d="M302.8 512.3 L306 519.8 L308.9 514.6 L311.8 519.8 L315 512.3" fill="none" stroke="#e32d24" stroke-width="2.2" stroke-linejoin="round"/>
 <rect x="305.7" y="524.6" width="7.3" height="1.6" rx=".8" fill="#1a6fd8"/>
 <g fill="#777"><rect x="210.9" y="524.7" width="3.2" height="1.1" rx=".5"/><rect x="258.7" y="524.7" width="3.2" height="1.1" rx=".5"/><rect x="282.8" y="524.7" width="3.2" height="1.1" rx=".5"/></g>
 <!-- tray -->
 <path d="M670 517 l2.8 -2.8 l2.8 2.8" fill="none" stroke="#333" stroke-width=".9"/>
 <rect x="688.3" y="510.8" width="3.8" height="6.3" rx="1.9" fill="#3a75d0"/>
 <path d="M687 515 a3.2 3.2 0 0 0 6.4 0 M690.2 518.2 v1.6 M688.5 519.8 h3.4" fill="none" stroke="#3a75d0" stroke-width=".8"/>
 <path d="M703 513.3 h2.5 v-1.5 h4 v1.5 h2.5 v4.5 h-2.5 v1.5 h-4 v-1.5 h-2.5 z M707.5 512 v7" fill="none" stroke="#999" stroke-width=".85"/>
 <rect x="724.3" y="510" width="9.8" height="9.8" rx="2" fill="#ee5a24" transform="rotate(-8 729.2 514.9)"/>
 <path d="M731 512.3 h-3.5 a1.2 1.2 0 0 0 0 2.5 h2.3 a1.2 1.2 0 0 1 0 2.5 h-3.5" fill="none" stroke="#fff" stroke-width="1.1"/>
 <path d="M745.5 513.5 q4.3 -3.5 8.6 0 M746.9 515.2 q2.9 -2.3 5.8 0 M748.3 516.9 q1.5 -1.2 3 0" fill="none" stroke="#444" stroke-width=".85"/>
 <circle cx="749.8" cy="518.5" r=".7" fill="#444"/>
 <path d="M758.3 513.4 h2 l2.5 -2.5 v9 l-2.5 -2.5 h-2 z" fill="none" stroke="#444" stroke-width=".85"/>
 <path d="M764 513.5 l3 3 M767 513.5 l-3 3" stroke="#444" stroke-width=".8"/>
 <rect x="771.8" y="512.2" width="8" height="5.3" rx=".8" fill="none" stroke="#333" stroke-width=".9"/>
 <rect x="773" y="513.3" width="4" height="3.1" fill="#222"/>
 <path d="M780.5 513.8 v2.1" stroke="#333" stroke-width="1"/>
 <path d="M825.8 519.3 h6.5 l-1 -1.3 v-3 a2.3 2.3 0 0 0 -4.5 0 v3 z M828 520.3 a1 1 0 0 0 2 0" fill="#222"/>
</svg>
<!-- ============ MEETING PANEL ============ -->
<div class="a" style="left:694px;top:36.6px;width:133px;height:395px;background:#2c2f33;overflow:hidden">
 <div class="a" style="left:0;top:0;width:133px;height:19px;background:#292c2f;border-bottom:.7px solid #1e2023"></div>
 <div class="a" style="left:0;top:86.5px;width:133px;height:.7px;background:#3a3d41"></div>
 <div class="a" style="left:0;top:161.5px;width:133px;height:.7px;background:#3a3d41"></div>
 <div class="a" style="left:0;top:236.5px;width:133px;height:.7px;background:#3a3d41"></div>
 <div class="a" style="left:0;top:311.2px;width:133px;height:.7px;background:#3a3d41"></div>
 <div class="a" style="left:0;top:386.4px;width:133px;height:.7px;background:#3a3d41"></div>
</div>
<div class="t" style="left:718.3px;top:43.3px;font-size:7px;letter-spacing:-.4px;color:#dcdcdc">正在讲话:</div>
<div class="a" style="left:694px;top:109px;width:14px;height:13.6px;background:#f57f17"></div>
<div class="nm" style="left:708px;top:109.5px;width:57.2px;height:13.1px;padding-left:11.7px">23国学迟晓雯</div>
<div class="nm" style="left:694px;top:185.2px;width:59px;height:11.7px;line-height:11.7px;padding-left:13px">23国学于美慧</div>
<div class="nm" style="left:694px;top:260px;width:30.8px;height:11.7px;line-height:11.7px;padding-left:13px">夏轩</div>
<div class="nm" style="left:694px;top:335px;width:37.8px;height:12.2px;line-height:12.2px;padding-left:13px">范仕轩</div>
<div class="nm" style="left:694px;top:410px;width:31.4px;height:12px;line-height:12px;padding-left:13px">孙璇</div>
<svg width="844" height="529">
 <defs>
  <clipPath id="c1"><circle cx="761.3" cy="78.8" r="20.8"/></clipPath>
  <clipPath id="c2"><circle cx="761.3" cy="153.8" r="20.8"/></clipPath>
  <clipPath id="c3"><circle cx="761.3" cy="228.3" r="20.8"/></clipPath>
  <clipPath id="c4"><circle cx="761.3" cy="303.8" r="20.8"/></clipPath>
  <clipPath id="c5"><circle cx="761.3" cy="378.3" r="20.8"/></clipPath>
  <g id="mic"><path d="M0 0 a1.6 1.6 0 0 1 3.2 0 v3 a1.6 1.6 0 0 1 -3.2 0 z" fill="#eee"/><path d="M-1 2.5 a2.6 2.6 0 0 0 5.2 0" fill="none" stroke="#eee" stroke-width=".6"/><path d="M-1.8 6.5 l6.8 -6" stroke="#d2382b" stroke-width=".9"/></g>
 </defs>
 <!-- header mic + sep + logo -->
 <use href="#mic" x="702.5" y="42.5"/>
 <path d="M713.5 41 v10" stroke="#45484c" stroke-width=".7"/>
 <path d="M806.3 48.5 q-.6 -.7 0 -1.4 l5.6 -6 q.7 -.7 1.4 0 l4.4 4.6 l3 -3 q.7 -.7 1.4 0 l4 4 v3.5 l-3.6 -3.6 l-3.8 4 l-1.2 1.2 q-.7 .7 -1.4 0 l-3.2 -3.2 l-3.2 3.3 q-.7 .7 -1.4 0 z" fill="#3c3f43"/>
 <!-- tags mics -->
 <use href="#mic" x="712" y="113"/>
 <use href="#mic" x="698.6" y="188.5"/>
 <use href="#mic" x="698.6" y="263.2"/>
 <use href="#mic" x="698.6" y="338.5"/>
 <use href="#mic" x="698.6" y="413.3"/>
 <!-- orange person icon -->
 <circle cx="701.5" cy="113.5" r="1.8" fill="#fff"/>
 <path d="M697.8 119.8 q.5 -3.8 3.7 -3.8 q3.2 0 3.7 3.8 z" fill="#fff"/>
 <!-- avatar 1: anime girl -->
 <g clip-path="url(#c1)">
  <rect x="740" y="57" width="43" height="43" fill="#dcc3b3"/>
  <path d="M740 80 q4 -4 8 0 l4 20 h-12z" fill="#cfa35a"/>
  <path d="M741 62 q20 -12 42 2 v8 q-6 -6 -12 -6 l-4 -4 q-12 1 -20 10 q-3 6 -4 14 l-2 -2z" fill="#d4b7a6"/>
  <path d="M748 70 l5 14 M758 62 l3 10 M770 62 l-2 9" stroke="#c9a896" stroke-width=".9" fill="none"/>
  <path d="M750 78 q3 -10 14 -11 q10 1 12 10 q1 10 -6 15 q-6 4 -13 0 q-7 -4 -7 -14z" fill="#f6e8e0"/>
  <path d="M774 66 q7 6 8 18 l-5 6 q0 -12 -5 -18z" fill="#dcc0b0"/>
  <path d="M753.5 76 q1.8 -1.6 3.6 0 M766 73.5 q1.8 -1.6 3.6 0" fill="none" stroke="#7a5a50" stroke-width=".7"/>
  <ellipse cx="754" cy="81" rx="2.5" ry="1.6" fill="#f2b9b9"/><ellipse cx="770.5" cy="78.5" rx="2.5" ry="1.6" fill="#f2b9b9"/>
  <path d="M758.5 82.5 q4.5 -1.5 7.5 .5 q-.5 4.5 -4 5 q-3.5 -.5 -3.5 -5.5z" fill="#c8707a" stroke="#8f4a52" stroke-width=".4"/>
  <path d="M744 97 q10 -8 22 -6 q10 0 17 -4 v13 h-39z" fill="#e3e9e9"/>
  <path d="M750 99 h28 v2 h-28z" fill="#9fb8d0"/>
 </g>
 <!-- avatar 2: curly hair on white -->
 <g clip-path="url(#c2)">
  <rect x="740" y="132" width="43" height="43" fill="#fbfaf9"/>
  <path d="M748 150 q2 -12 13 -13 q12 0 15 10 q3 8 1 16 q-1 8 -8 11 h-14 q-7 -3 -8 -11 q-2 -6 1 -13z" fill="#b08c72"/>
  <path d="M751 156 q3 -6 5 0 q2 6 -1 12 q-4 -4 -4 -12z M768 152 q4 2 5 8 q0 6 -4 9 q-2 -8 -1 -17z" fill="#c9a36e"/>
  <path d="M756 146 q3 -3 7 0 q2 5 0 10 q-4 2 -6 -2 q-2 -4 -1 -8z" fill="#f3e9dc"/>
  <path d="M758 157 q4 2 4 8 l-3 5 q-3 -6 -1 -13z" fill="#e6cfa6"/>
  <path d="M764 163 q5 -1 7 5 l-3 4 q-4 -3 -4 -9z" fill="#a8583f"/>
  <path d="M744.5 153 l1.5 -1 M777.5 150.5 l1.5 1" stroke="#9fb8d8" stroke-width=".8"/>
 </g>
 <!-- avatar 3: chibi -->
 <g clip-path="url(#c3)">
  <rect x="740" y="207" width="43" height="43" fill="#d9dadb"/>
  <path d="M740 207 h43 v16 q-20 -6 -43 0z" fill="#2c2d2f"/>
  <path d="M748 216 q15 -9 31 -1 l-1 2.2 q-14 -7 -29 0.5z" fill="#ededed"/>
  <path d="M740 222 h10 l2 22 l-3 6 h-9z" fill="#1f2022"/>
  <circle cx="743.8" cy="225.2" r="2.1" fill="#c44b3a"/>
  <path d="M747 221 q14 -7 33 -1 l3 4 v14 q-3 -2 -5 -6 q-14 -3 -26 0 q-2 6 -5 10z" fill="#e9c552"/>
  <ellipse cx="760.5" cy="234" rx="10" ry="9.5" fill="#f3e5cf"/>
  <path d="M750 226 q8 -4 16 -2 l-2 4 q-7 -2 -14 0z" fill="#e9c552"/>
  <ellipse cx="754" cy="232" rx="1.5" ry="2.4" fill="#2a7d84"/><ellipse cx="766.5" cy="232" rx="1.5" ry="2.4" fill="#2a7d84"/>
  <path d="M749 243 q8 2 12 9 h-12z" fill="#5e6468"/>
  <path d="M757 244 l12 -2 l6 8 h-18z" fill="#6d7378"/>
  <path d="M744 238 l6 8 l-2 4 h-8z" fill="#f2f2f2"/>
  <ellipse cx="772.5" cy="240.5" rx="5.5" ry="6" fill="#e4bfb1"/>
  <path d="M776 222 q5 4 7 10 v8 q-4 -2 -6 -4z" fill="#e2b848"/>
 </g>
 <!-- avatar 4: woman -->
 <g clip-path="url(#c4)">
  <rect x="740" y="282" width="43" height="43" fill="#3b5a4f"/>
  <path d="M740 309 h43 v16 h-43z" fill="#bdb7a6"/>
  <path d="M740 304 q4 -5 9 -2 l2 22 h-11z" fill="#d9a58d"/>
  <path d="M741 309 q5 -3 10 0 v16 h-10z" fill="#eeeeee"/>
  <path d="M754.5 290 q6.5 -6 13 0 l1.5 28 h-3 l-1 -18 h-8 l-1 18 h-3z" fill="#251c1f"/>
  <ellipse cx="761" cy="296.5" rx="3.6" ry="4.6" fill="#f1dcd3"/>
  <path d="M756 304 q5 -2 10 0 l5 1 l1 20 h-21 l1 -20z" fill="#f0f0f0"/>
  <path d="M755 300 l-2 19 h2.5 l2 -17z M767 300 l2 19 h-2.5 l-2 -17z" fill="#241b1e"/>
  <path d="M770 306 q6 0 9 6 v13 h-8z" fill="#efefef"/>
  <circle cx="760.3" cy="300" r=".6" fill="#c44"/>
 </g>
 <text x="744.2" y="297.8" font-size="6.6" fill="#f4f4f4" font-family="Liberation Sans" font-weight="bold">不</text>
 <text x="772.2" y="298" font-size="6.6" fill="#f4f4f4" font-family="Liberation Sans" font-weight="bold">肩</text>
 <!-- avatar 5: sea -->
 <g clip-path="url(#c5)">
  <rect x="740" y="357" width="43" height="43" fill="#b3bfcc"/>
  <path d="M740 376 q6 -2 10 -3 q8 -5 16 -6 q6 0 12 2 l5 1 v10 h-43z" fill="#6b7079"/>
  <path d="M740 376.5 q12 -2 24 -1 l4 2.5 h-28z" fill="#8d8a85"/>
  <rect x="740" y="378" width="43" height="22" fill="#2d4a70"/>
  <path d="M741 384 h30 M744 390 h26" stroke="#3c5a80" stroke-width=".6"/>
  <path d="M776 363 q5 3 7 8 v29 h-9 q-4 -8 -2 -18 q1 -10 4 -19z" fill="#17181a"/>
  <path d="M767 380 q4 -4 7 -2 q1.5 8 -1 15 l-3 7 h-4 q-2 -10 1 -20z" fill="#cdb9aa" opacity=".75"/>
  <g fill="#e8602e"><circle cx="770" cy="377.5" r="1.6"/><circle cx="767.5" cy="382.5" r="1.3"/><circle cx="766.5" cy="388" r="1.4"/><circle cx="767" cy="393.5" r="1.3"/><circle cx="771" cy="385" r="1"/></g>
  <path d="M762 368 l2.5 -1.5 l2 1.2 l2.5 -2.5" fill="none" stroke="#f4f4f4" stroke-width="1"/>
  <path d="M752 395 l2.5 -1.2 l2 1.2" fill="none" stroke="#fff" stroke-width=".9"/>
 </g>
<!-- ============ SHARING BAR + NOTIFICATION ============ -->
<div class="a" style="left:368.8px;top:0;width:102.8px;height:13.9px;background:#2a2c2e;border-radius:0 0 3px 3px"></div>
<div class="t" style="left:387px;top:3.5px;font-size:7px;letter-spacing:-.4px;color:#d9d9d9">您正在共享屏幕</div>
<div class="a" style="left:438.9px;top:3.1px;width:31.3px;height:8.3px;background:#a63a2b;border-radius:1.5px"></div>
<div class="t" style="left:441.8px;top:4px;font-size:6.2px;color:#f2f2f2">结束共享</div>
<div class="a" style="left:339px;top:15px;width:163.2px;height:15.1px;background:#fff;border-radius:4px;box-shadow:0 .5px 2px rgba(0,0,0,.12)"></div>
<div class="t" style="left:357.2px;top:19px;font-size:7px;letter-spacing:-.5px;color:#333">会议已超过2人，自动转为60分钟限时会议。</div>
<svg width="844" height="529">
 <g fill="#19c27a"><rect x="373.8" y="7.5" width="1.7" height="3.2"/><rect x="376.6" y="5.5" width="1.7" height="5.2"/><rect x="379.4" y="3.6" width="1.7" height="7.1"/></g>
 <circle cx="348.7" cy="22.3" r="3.8" fill="#2f6ff2"/>
 <path d="M348.7 20 v2.6 M348.7 23.8 v.8" stroke="#fff" stroke-width=".9"/>
 <path d="M489.3 19 l6.3 6.3 M495.6 19 l-6.3 6.3" stroke="#444" stroke-width=".95"/>
</svg>
<!-- ============ STICKER ============ -->
<svg width="844" height="529">
 <path d="M769 452 h59.5 a6 6 0 0 1 5.6 5.2 a5 5 0 0 0 5.4 5.6 v19.2 a5 5 0 0 0 -5.4 5.6 a6 6 0 0 1 -5.6 3.6 h-59.5 a6 6 0 0 1 -5.6 -3.6 a5 5 0 0 0 -5.4 -5.6 v-19.2 a5 5 0 0 0 5.4 -5.6 a6 6 0 0 1 5.6 -5.2z" fill="#fffdfb" stroke="#d6a29c" stroke-width=".9"/>
 <path d="M759 470 q5 -4 10 -3 q4 -3 8 -1 q6 -3 12 0 q8 -2 17 1.5 v3 q-20 2 -47 1.5z" fill="#d9d2bd" opacity=".85"/><path d="M762 474 q15 -2 40 0 v1.5 h-40z" fill="#e6e0cf"/>
 <circle cx="779.5" cy="477.5" r="3.3" fill="#cf6b62"/>
 <circle cx="799" cy="476.5" r="4.2" fill="#d07365"/>
 <circle cx="794" cy="478" r="3" fill="#d58a7a"/>
 <path d="M782 482 q8 -6 14 -2 q6 -2 10 1 v2 h-24z" fill="#9fae86"/>
 <path d="M785 489 q15 -8 40 -7 q6 2 10 5 l-4 4 h-44z" fill="#d88a80" opacity=".85"/>
 <path d="M818 483 q4 -5 10 -2 l4 5 h-14z" fill="#8fa07a"/>
 <circle cx="818" cy="470.5" r="3.6" fill="#c8534b"/>
 <circle cx="828" cy="465" r="3.2" fill="#c9866a"/>
 <circle cx="822" cy="455.5" r="2.2" fill="#b99a5a"/>
 <circle cx="830" cy="458" r="2" fill="#a5a86a"/>
 <path d="M814 459 l6 4 M825 467 l3 6" stroke="#5f7a4a" stroke-width="1.6"/>
 <text x="771.2" y="464.8" font-size="10" font-weight="bold" fill="#a8842e" font-family="Liberation Sans">中</text>
 <circle cx="787" cy="459.5" r="1.3" fill="none" stroke="#a8842e" stroke-width=".8"/>
 <path d="M792.5 461 q.8 1 -.5 2.5" stroke="#a8842e" stroke-width="1" fill="none"/>
 <path d="M799.3 457 l2.3 -1 h3 l2.3 1 l.7 2.2 l-1.6 .4 v4.6 h-5.8 v-4.6 l-1.6 -.4z" fill="#a8842e"/>
 <path d="M793.5 464 l1 2" stroke="#c75a50" stroke-width="1"/>
</svg>
<!-- ============ GREEN CORNERS ============ -->
<div class="g" style="left:0;top:0;width:63.5px;height:3.3px"></div>
<div class="g" style="left:0;top:0;width:1.3px;height:65px"></div>
<div class="g" style="left:777.8px;top:0;width:66.2px;height:3.3px"></div>
<div class="g" style="left:840.5px;top:0;width:3.5px;height:66px"></div>
<div class="g" style="left:0;top:525.5px;width:63.5px;height:3.5px"></div>
<div class="g" style="left:0;top:462px;width:1.3px;height:67px"></div>
<div class="g" style="left:777.8px;top:525.8px;width:66.2px;height:3.2px"></div>
<div class="g" style="left:840.5px;top:463.4px;width:3.5px;height:65.6px"></div>
</body></html>
